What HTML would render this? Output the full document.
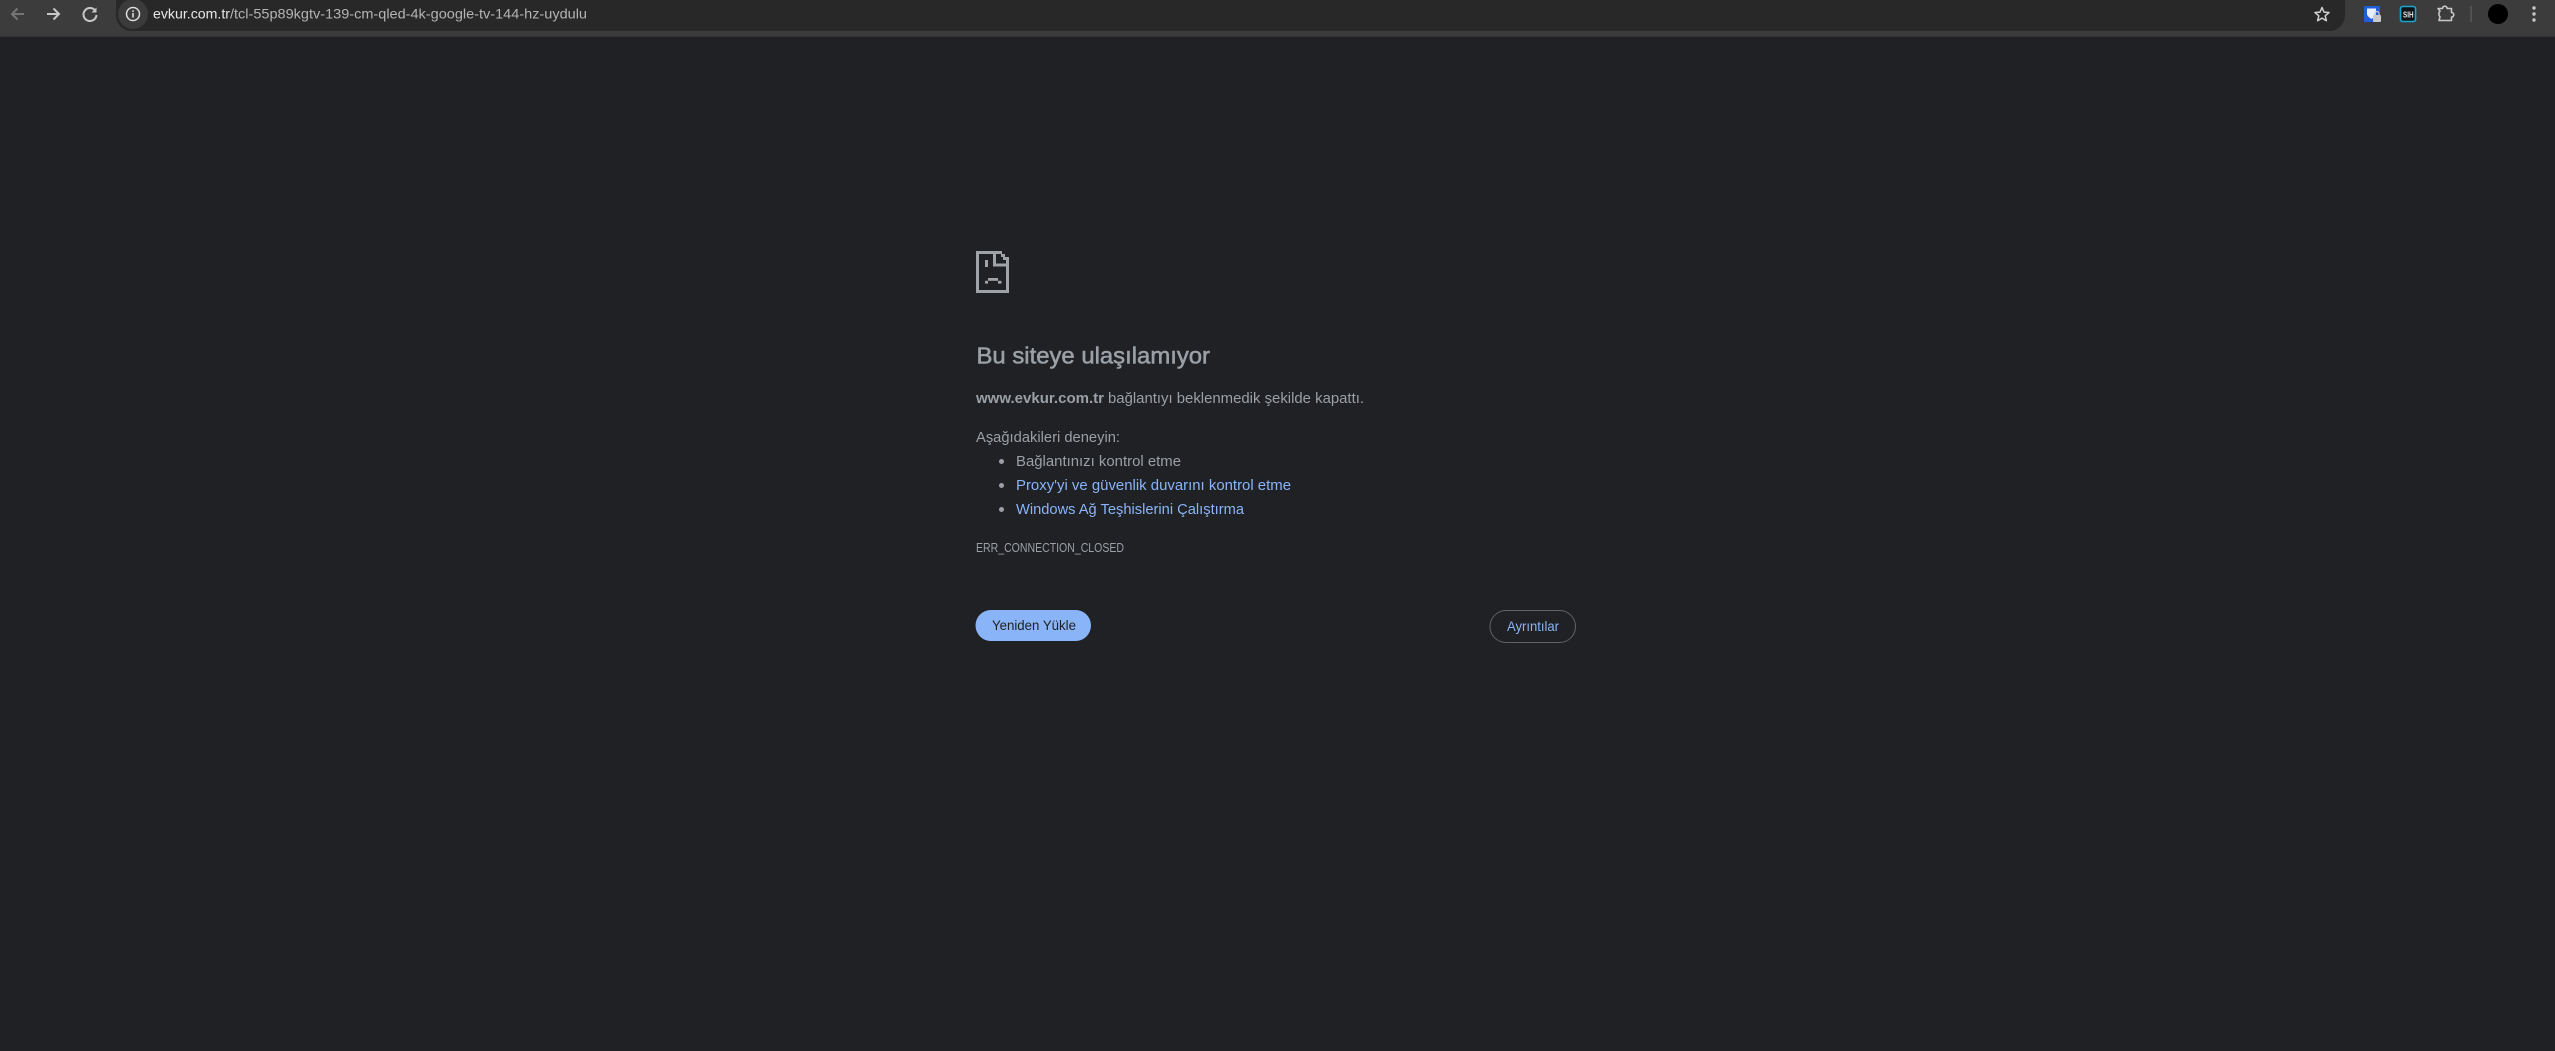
<!DOCTYPE html>
<html lang="tr">
<head>
<meta charset="utf-8">
<title>evkur.com.tr</title>
<style>
html,body{margin:0;padding:0;width:2555px;height:1051px;overflow:hidden;background:#202124}
svg{display:block;position:absolute;left:0;top:0}
text{font-family:"Liberation Sans",sans-serif}
</style>
</head>
<body>
<svg width="2555" height="1051" viewBox="0 0 2555 1051" xmlns="http://www.w3.org/2000/svg">
<rect width="2555" height="1051" fill="#202124"/>
<!-- toolbar -->
<rect width="2555" height="37" fill="#3c3c3c"/>
<rect y="36" width="2555" height="1" fill="#333333"/>
<rect x="116" y="-20" width="2229" height="51" rx="15.500" fill="#282828"/>
<circle cx="133" cy="14" r="15" fill="#3b3b3b"/>
<!-- nav icons -->
<path d="M24 14H12M17.500 8.500L12 14l5.500 5.500" fill="none" stroke="#757575" stroke-width="2"/>
<path d="M47 14h12M53.500 8.500L59 14l-5.500 5.500" fill="none" stroke="#c7c7c7" stroke-width="2"/>
<path d="M95.500 11A6.500 6.500 0 1 0 96.500 15" fill="none" stroke="#c7c7c7" stroke-width="2"/>
<path d="M96.500 7.500v5h-5z" fill="#c7c7c7"/>
<!-- info -->
<circle cx="133" cy="14" r="6.500" fill="none" stroke="#dcdcdc" stroke-width="1.500"/>
<rect x="132.200" y="13" width="1.600" height="4.500" fill="#dcdcdc"/>
<rect x="132.200" y="10.300" width="1.600" height="1.600" fill="#dcdcdc"/>
<!-- url -->
<text x="153" y="18.500" font-size="14" fill="#e8e8e8" textLength="77" lengthAdjust="spacingAndGlyphs">evkur.com.tr</text>
<text x="230" y="18.500" font-size="14" fill="#b4b4b4" textLength="357" lengthAdjust="spacingAndGlyphs">/tcl-55p89kgtv-139-cm-qled-4k-google-tv-144-hz-uydulu</text>
<!-- star -->
<path d="M2322 7.500l2 4.600 5 .4-3.800 3.300 1.200 4.900-4.400-2.600-4.400 2.600 1.200-4.900-3.800-3.300 5-.4z" fill="none" stroke="#d0d0d0" stroke-width="1.500" stroke-linejoin="round"/>
<!-- extension 1 -->
<rect x="2364" y="6" width="16" height="16" rx="1" fill="#1f5fd6"/>
<path d="M2367 8.500h9v5c0 2.500-2 4-4.500 5.500-2.500-1.500-4.500-3-4.500-5.500z" fill="#e8eefa"/>
<rect x="2373" y="15" width="8" height="7" rx="1" fill="#c9c9c9"/>
<path d="M2375 15v-1.500a2 2 0 0 1 4 0V15" fill="none" stroke="#c9c9c9" stroke-width="1.200"/>
<!-- extension 2 -->
<rect x="2400.500" y="6.500" width="15" height="15" rx="2" fill="#101418" stroke="#1aa5d0" stroke-width="1.600"/>
<text x="2403" y="17.500" font-size="8.500" font-weight="700" fill="#e6e6e6" textLength="10.500" lengthAdjust="spacingAndGlyphs">SIH</text>
<!-- puzzle -->
<path d="M2438 8.500h4.500a2.300 2.300 0 0 1 4.600 0h4.400v4a2.300 2.300 0 0 1 0 4.600v3.400h-12.500l1-3.500-1-2v-2.500l1-1.500z" fill="none" stroke="#c9c9c9" stroke-width="1.600" stroke-linejoin="round"/>
<!-- separator -->
<rect x="2470.500" y="6" width="1.200" height="16" fill="#5e5e5e"/>
<!-- avatar -->
<circle cx="2498" cy="14" r="10" fill="#000"/>
<!-- menu -->
<circle cx="2534" cy="8" r="1.700" fill="#c7c7c7"/>
<circle cx="2534" cy="14" r="1.700" fill="#c7c7c7"/>
<circle cx="2534" cy="20" r="1.700" fill="#c7c7c7"/>
<!-- sad tab icon -->
<g fill="#a0a4a8">
<path fill-rule="evenodd" d="M976 251h26v3h3v3h4v36h-33zM979 254v36h27v-23.500h-13v-12.500zM996 254v9.500h10v-3.500h-3v-3h-2v-3z"/>
<rect x="985" y="260" width="3" height="7"/>
<rect x="988" y="278" width="10" height="2.800"/>
<rect x="985" y="280.800" width="3" height="2.800"/>
<rect x="998" y="280.800" width="3.500" height="2.800"/>
</g>
<!-- heading -->
<text x="976.500" y="363.500" font-size="23" fill="#9aa0a6" stroke="#9aa0a6" stroke-width=".55" textLength="233.500" lengthAdjust="spacingAndGlyphs">Bu siteye ulaşılamıyor</text>
<!-- summary -->
<text x="976" y="403" font-size="15" font-weight="700" fill="#9aa0a6" textLength="128" lengthAdjust="spacingAndGlyphs">www.evkur.com.tr</text>
<text x="1108" y="403" font-size="15" fill="#9aa0a6" textLength="256" lengthAdjust="spacingAndGlyphs">bağlantıyı beklenmedik şekilde kapattı.</text>
<!-- suggestions -->
<text x="976" y="442" font-size="15" fill="#9aa0a6" textLength="144" lengthAdjust="spacingAndGlyphs">Aşağıdakileri deneyin:</text>
<circle cx="1001.500" cy="461.500" r="2.500" fill="#9aa0a6"/>
<circle cx="1001.500" cy="485.500" r="2.500" fill="#9aa0a6"/>
<circle cx="1001.500" cy="509.500" r="2.500" fill="#9aa0a6"/>
<text x="1016" y="466" font-size="15" fill="#9aa0a6" textLength="165" lengthAdjust="spacingAndGlyphs">Bağlantınızı kontrol etme</text>
<text x="1016" y="490" font-size="15" fill="#8ab4f8" textLength="275" lengthAdjust="spacingAndGlyphs">Proxy'yi ve güvenlik duvarını kontrol etme</text>
<text x="1016" y="514" font-size="15" fill="#8ab4f8" textLength="228" lengthAdjust="spacingAndGlyphs">Windows Ağ Teşhislerini Çalıştırma</text>
<!-- error code -->
<text x="976" y="552" font-size="12.500" fill="#9aa0a6" textLength="148" lengthAdjust="spacingAndGlyphs">ERR_CONNECTION_CLOSED</text>
<!-- buttons -->
<rect x="975.500" y="610" width="115.500" height="31" rx="15.500" fill="#8ab4f8"/>
<text x="992" y="630" font-size="14" fill="#202124" textLength="84" lengthAdjust="spacingAndGlyphs">Yeniden Yükle</text>
<rect x="1490" y="610.500" width="85.500" height="32" rx="16" fill="none" stroke="#5f6368" stroke-width="1"/>
<text x="1507" y="631" font-size="14" fill="#8ab4f8" textLength="52" lengthAdjust="spacingAndGlyphs">Ayrıntılar</text>
</svg>
</body>
</html>
